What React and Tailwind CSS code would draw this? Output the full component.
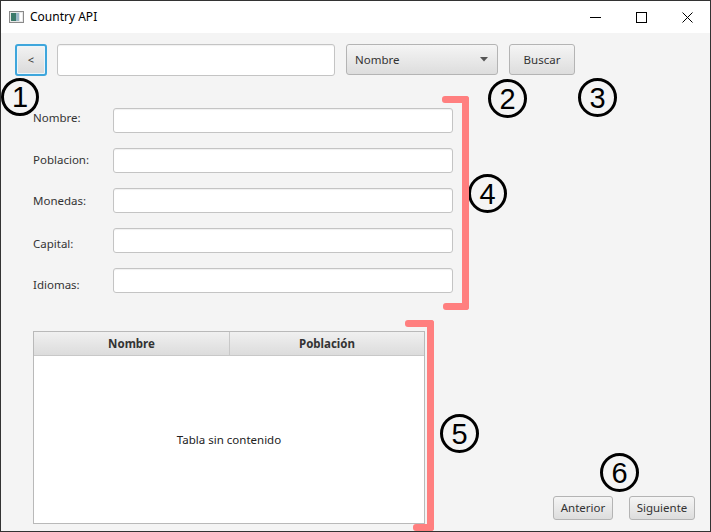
import React from "react";

const FONT = { fontFamily: '"Noto Sans", "Open Sans", sans-serif' };

const Circled = ({ n, x, y, size = 39 }) => (
  <div
    className="absolute rounded-full border-[3px] border-black flex items-center justify-center text-black text-[29px] leading-none"
    style={{ left: x, top: y, width: size, height: size, fontFamily: '"Liberation Sans", sans-serif' }}
  >
    <span className="mt-[1px]">{n}</span>
  </div>
);

// red annotation bracket, opens to the left
const Bracket = ({ x, top, bottom, stubTop, stubBottom }) => (
  <>
    <div className="absolute bg-[#ff7f7f] rounded-[3px]" style={{ left: x, top, width: 7, height: bottom - top }} />
    <div className="absolute bg-[#ff7f7f] rounded-[3px]" style={{ left: stubTop, top, width: x + 7 - stubTop, height: 7 }} />
    <div className="absolute bg-[#ff7f7f] rounded-[3px]" style={{ left: stubBottom, top: bottom - 7, width: x + 7 - stubBottom, height: 7 }} />
  </>
);

const Btn = ({ children, className = "" }) => (
  <button
    className={`rounded-[3px] border border-[#b4b4b4] bg-gradient-to-b from-[#f5f5f5] to-[#dddddd] text-[11.5px] text-[#333] flex items-center justify-center ${className}`}
  >
    {children}
  </button>
);

const Field = ({ className = "" }) => (
  <div className={`rounded-[3px] border border-[#c4c4c4] bg-white shadow-[inset_0_1px_1px_rgba(0,0,0,0.06)] ${className}`} />
);

const fields = [
  { label: "Nombre:", shift: "-mt-[6px]" },
  { label: "Poblacion:", shift: "-mt-[2px]" },
  { label: "Monedas:", shift: "mt-0" },
  { label: "Capital:", shift: "mt-[6px]" },
  { label: "Idiomas:", shift: "mt-[8px]" },
];

export default function App() {
  return (
    <div className="w-[711px] h-[532px] border border-[#333] bg-[#f4f4f4] relative overflow-hidden flex flex-col" style={FONT}>
      {/* title bar */}
      <div className="h-[32px] bg-white flex items-center shrink-0">
        <svg width="15" height="12" viewBox="0 0 15 12" className="ml-[8px]">
          <rect x="0.5" y="0.5" width="14" height="11" fill="#e8e8e8" stroke="#8a8a8a" />
          <rect x="2" y="2" width="5" height="8" fill="#3b7a6a" />
          <rect x="7" y="2" width="3" height="8" fill="#9bb8c8" />
          <rect x="11" y="2" width="2" height="8" fill="#ffffff" />
        </svg>
        <span className="ml-[6px] text-[12px] text-black">Country API</span>
        <div className="ml-auto flex items-center h-full">
          <div className="w-[46px] h-full flex items-center justify-center">
            <div className="w-[11px] h-[1px] bg-black" />
          </div>
          <div className="w-[46px] h-full flex items-center justify-center">
            <div className="w-[11px] h-[11px] border border-black" />
          </div>
          <div className="w-[46px] h-full flex items-center justify-center">
            <svg width="11" height="11" viewBox="0 0 11 11">
              <path d="M0.5 0.5 L10.5 10.5 M10.5 0.5 L0.5 10.5" stroke="#000" strokeWidth="1" />
            </svg>
          </div>
        </div>
      </div>

      {/* search row */}
      <div className="flex items-start pt-[11px] pl-[14px]">
        <button className="w-[32px] h-[32px] rounded-[3px] border-2 border-[#3ea6dc] bg-gradient-to-b from-[#f2f2f2] to-[#dadada] shadow-[inset_0_0_0_1px_#eaf5fb] text-[11px] text-[#333] flex items-center justify-center">
          &lt;
        </button>
        <Field className="ml-[10px] w-[278px] h-[32px]" />
        <div className="ml-[11px] w-[152px] h-[31px] rounded-[3px] border border-[#b4b4b4] bg-gradient-to-b from-[#f5f5f5] to-[#dddddd] flex items-center pl-[8px] pr-[9px] text-[11.5px] text-[#333]">
          <span>Nombre</span>
          <svg width="8" height="5" viewBox="0 0 8 5" className="ml-auto">
            <path d="M0 0 H8 L4 4.5 Z" fill="#555" />
          </svg>
        </div>
        <Btn className="ml-[11px] w-[66px] h-[31px]">Buscar</Btn>
      </div>

      {/* form */}
      <div className="mt-[32px] pl-[32px] flex flex-col gap-[15px]">
        {fields.map((f) => (
          <div key={f.label} className="flex items-center h-[25px]">
            <span className={`w-[80px] text-[11.5px] text-[#333] ${f.shift}`}>{f.label}</span>
            <Field className="w-[340px] h-[25px]" />
          </div>
        ))}
      </div>

      {/* table + paging */}
      <div className="mt-[38px] pl-[32px] pr-[15px] flex items-end">
        <div className="w-[392px] h-[193px] border border-[#b9b9b9] bg-white flex flex-col">
          <div className="h-[24px] flex bg-gradient-to-b from-[#f0f0f0] to-[#dcdcdc] border-b border-[#c8c8c8] text-[11.5px] font-bold text-[#333]">
            <div className="w-[196px] border-r border-[#c8c8c8] flex items-center justify-center">Nombre</div>
            <div className="flex-1 flex items-center justify-center">Población</div>
          </div>
          <div className="flex-1 flex items-center justify-center text-[11.5px] text-[#222]">Tabla sin contenido</div>
        </div>
        <div className="flex-1 flex justify-end gap-[16px] mb-[4px]">
          <Btn className="w-[60px] h-[24px]">Anterior</Btn>
          <Btn className="w-[66px] h-[24px]">Siguiente</Btn>
        </div>
      </div>

      {/* annotations */}
      <Circled n="1" x={0} y={77} size={38} />
      <Circled n="2" x={487} y={78} />
      <Circled n="3" x={577} y={77} />
      <Circled n="4" x={467} y={173} />
      <Circled n="5" x={439} y={413} />
      <Circled n="6" x={599} y={452} />
      <Bracket x={461} top={95} bottom={309} stubTop={441} stubBottom={442} />
      <Bracket x={426} top={319} bottom={530} stubTop={404} stubBottom={412} />
    </div>
  );
}
